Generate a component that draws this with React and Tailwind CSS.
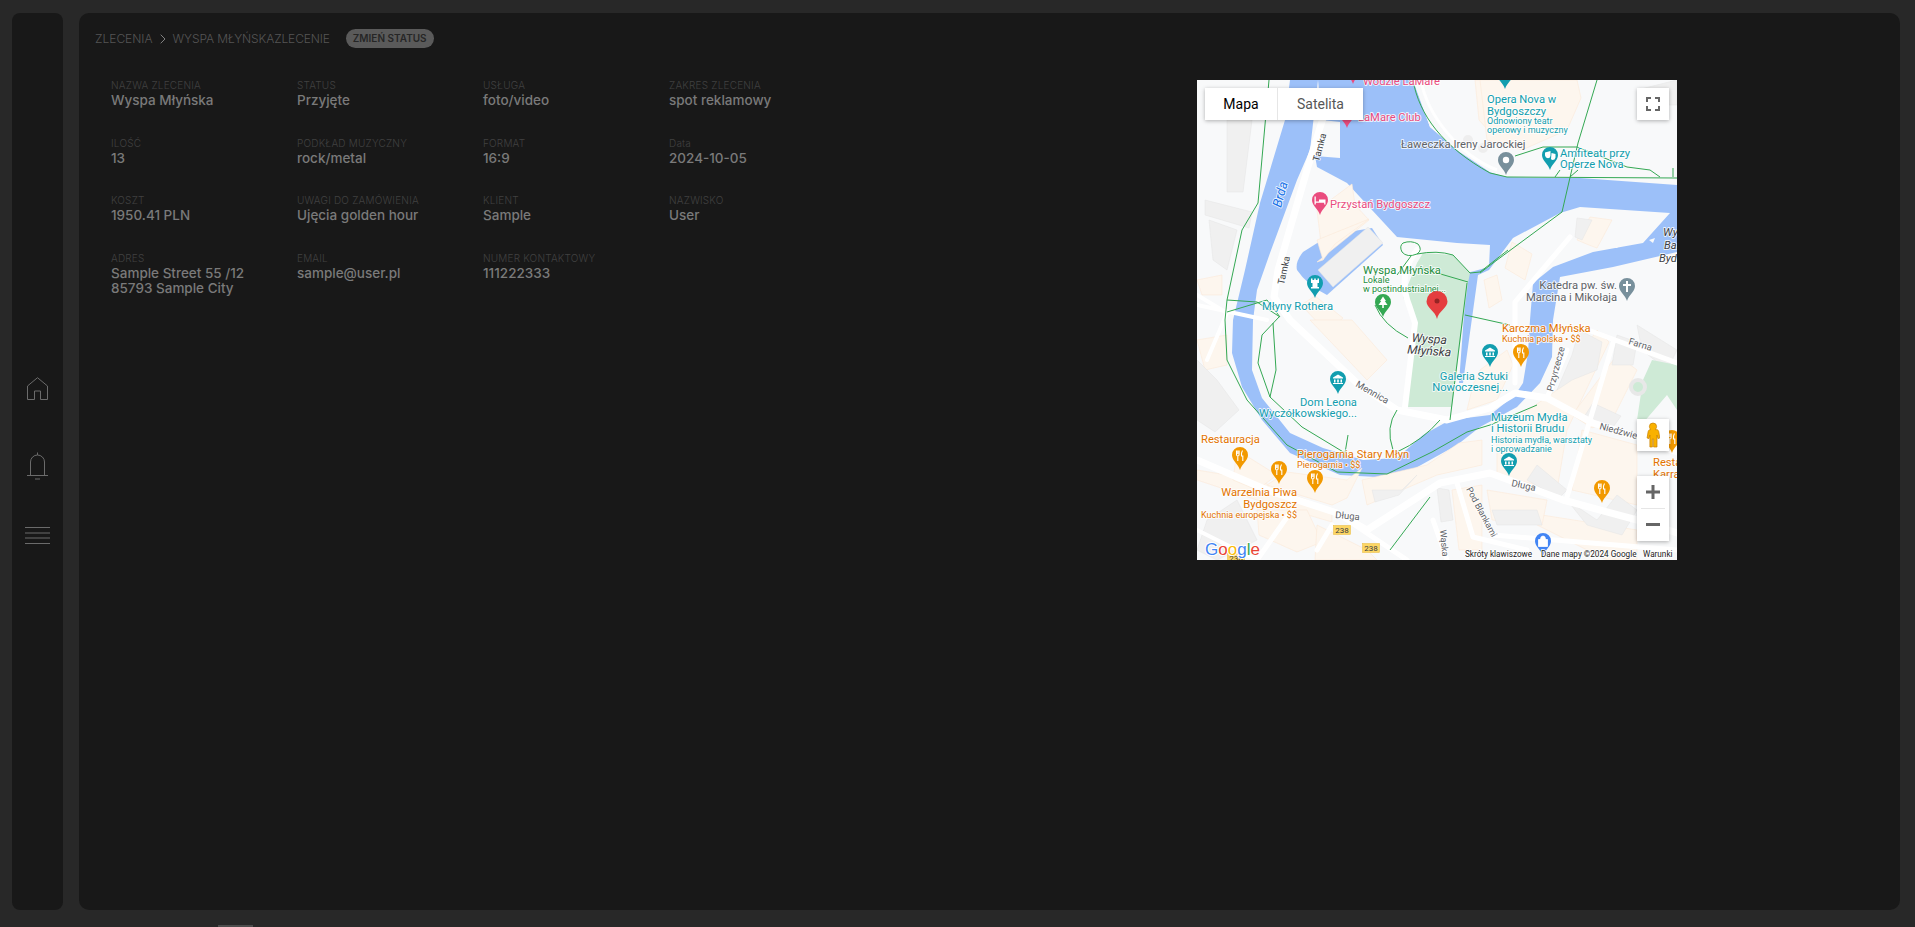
import React from "react";

const fields = [
  ["NAZWA ZLECENIA", "Wyspa Młyńska"], ["STATUS", "Przyjęte"], ["USŁUGA", "foto/video"], ["ZAKRES ZLECENIA", "spot reklamowy"],
  ["ILOŚĆ", "13"], ["PODKŁAD MUZYCZNY", "rock/metal"], ["FORMAT", "16:9"], ["Data", "2024-10-05"],
  ["KOSZT", "1950.41 PLN"], ["UWAGI DO ZAMÓWIENIA", "Ujęcia golden hour"], ["KLIENT", "Sample"], ["NAZWISKO", "User"],
  ["ADRES", "Sample Street 55 /12\n85793 Sample City"], ["EMAIL", "sample@user.pl"], ["NUMER KONTAKTOWY", "111222333"],
];

const TEAL = "#129eaf", ORANGE = "#e37400", PINK = "#ea4c7e", GREEN = "#1e8e3e", GRAY = "#5f6368";

function Pin({ x, y, c, g }) {
  const white = "#fff";
  return (
    <g transform={`translate(${x} ${y})`}>
      <path d="M0 23C-1.5 17-8 14-8 8A8 8 0 1 1 8 8C8 14 1.5 17 0 23Z" fill={c} />
      {g === "food" && <path d="M-3.5 3.5V7.5Q-3.5 9-2.2 9V14M-2.2 3.5V7M-0.9 3.5V7.5Q-0.9 9-2.2 9M2.5 3.5Q1 6 1.5 9H2.8V14" stroke={white} strokeWidth="1.1" fill="none" />}
      {g === "museum" && <path d="M-5 6.5L0 3.5L5 6.5V7.5H-5ZM-4 8.5H-2.5V11.5H-4ZM-.8 8.5H.8V11.5H-.8ZM2.5 8.5H4V11.5H2.5ZM-5 12H5V13H-5Z" fill={white} />}
      {g === "tree" && <path d="M0 2.5L3 7H1.8L4.5 11H.8V14H-.8V11H-4.5L-1.8 7H-3Z" fill={white} />}
      {g === "bed" && <path d="M-5.5 4.5V12.5H-4.2V10.8H4.2V12.5H5.5V7.5H-1V9.5H-4.2V4.5Z" fill={white} />}
      {g === "castle" && <path d="M-4 3.5H-2.5V5H-.8V3.5H.8V5H2.5V3.5H4V8H2.5V12H4V13.5H-4V12H-2.5V8H-4Z" fill={white} />}
      {g === "theater" && <path d="M-5 5.5L.5 4V8.5Q.5 11-2 11.3Q-4.5 11-5 8.5ZM1.5 6L5.5 7V10.5Q5 13 2.5 13Q1 12.5 1 12Z" fill={white} />}
      {g === "dot" && <circle cx="0" cy="8" r="3.2" fill={white} />}
      {g === "cross" && <path d="M-1 3H1V6H4V8H1V14H-1V8H-4V6H-1Z" fill={white} />}
      {g === "shop" && <path d="M-4.5 6.5H4.5V13.5H-4.5ZM-2.5 6.5Q-2.5 3 0 3Q2.5 3 2.5 6.5" fill={white} stroke={white} strokeWidth=".8" />}
    </g>
  );
}

function L({ x, y, c = GRAY, s = 11.2, w = 400, i, a, r, children }) {
  return (
    <text
      x={x} y={y} fill={c} fontSize={s} fontWeight={w} fontStyle={i ? "italic" : "normal"} textAnchor={a}
      transform={r ? `rotate(${r} ${x} ${y})` : undefined}
      stroke="#fff" strokeWidth="1.8" strokeOpacity=".8" paintOrder="stroke" strokeLinejoin="round"
      fontFamily="Roboto, sans-serif"
    >{children}</text>
  );
}

function Shield({ x, y }) {
  return (
    <g>
      <rect x={x - 8.5} y={y - 4.5} width="17" height="9" fill="#fdd663" stroke="#e8b93a" strokeWidth=".5" />
      <text x={x} y={y + 3} fontSize="8" textAnchor="middle" fill="#3c4043" fontFamily="Roboto, sans-serif">238</text>
    </g>
  );
}

const peach = [
  "120,130 155,104 158,125 172,140 120,182 126,180",
  "120,160 172,139 138,164 126,180",
  "104,225 118,216 146,238 130,252",
  "0,200 25,195 25,215 5,215",
  "278,0 320,0 326,25 300,60 282,40",
  "283,290 310,270 316,285 300,320 270,330 276,305",
  "0,260 30,255 30,285 8,290",
  "113,240 170,300 190,280 155,240",
  "0,390 60,400 110,420 135,432 135,442 60,420 0,400",
  "40,370 80,395 60,410 36,400",
  "70,405 135,425 150,418 165,388 150,400 90,392",
  "165,400 230,385 262,363 285,360 285,385 240,395 170,425",
  "60,430 110,430 125,462 100,472 62,455",
  "120,445 170,470 180,480 118,480",
  "300,352 360,310 400,250 412,262 370,350 360,410 300,395",
  "375,335 420,275 440,290 415,340 395,348",
  "385,350 440,365 440,425 375,410",
  "345,435 440,450 440,480 410,480 340,445",
  "255,410 285,405 285,470 262,470",
  "290,410 350,420 345,445 295,440",
  "393,137 415,140 400,168 392,165 380,160",
  "315,162 335,174 328,200 308,188",
  "287,200 300,195 305,220 292,228",
  "283,0 380,0 384,18 370,50 325,70 290,60",
];
const grayB = [
  "121,190 171,147 186,163 136,207",
  "8,120 55,132 52,148 8,135",
  "30,40 55,40 46,112 30,112",
  "12,140 40,150 30,190 16,180",
  "0,280 20,300 42,330 18,352 0,340",
  "382,250 405,262 400,290 375,300 360,310 375,275",
  "396,323 424,336 414,350 385,340",
  "340,385 370,410 362,418 330,400",
  "380,138 395,140 385,160 378,157",
  "175,410 205,410 220,395 202,415 178,422",
  "10,440 40,420 60,460 20,480 0,470",
  "295,430 340,430 345,445 300,445",
  "370,420 400,440 420,415 440,430 425,455 390,445",
  "240,408 252,410 256,440 244,442",
  "440,10 480,0 480,25 455,25",
  "420,255 440,262 436,285 415,285",
  "440,245 480,270 470,290 445,270",
];

function MapArt() {
  return (
    <svg viewBox="0 0 480 480" width="480" height="480" className="block">
      <rect width="480" height="480" fill="#f8f9fa" />
      {/* water */}
      <polygon fill="#9cc0f9" points="93,0 216,0 233,47 260,70 293,92 310,97 383,98 480,105 480,172 416,187 363,197 356,240 355,277 343,303 320,327 283,347 260,365 233,380 206,395 180,397 143,395 93,373 65,340 45,307 35,273 36,240 48,190 63,123 88,40" />
      {/* land */}
      <polygon fill="#f8f9fa" points="121,0 125,40 143,42 143,78 118,76 120,87 150,103 200,157 260,163 293,165 292,187 270,193 262,303 266,303 281,195 292,190 316,158 363,133 383,127 473,133 446,163 396,172 356,187 336,203 333,240 331,273 326,303 318,315 293,335 253,340 226,355 200,378 166,380 126,368 93,353 65,318 55,290 56,240 60,210 73,173 100,100 113,70" />
      <path d="M100 190Q98 182 106 172L133 155L175 148L186 165L130 215Q110 205 100 190Z" fill="#9cc0f9" />
      <path d="M408 167Q420 160 425 162L420 168ZM452 160L458 158L456 163Z" fill="#f8f9fa" />
      {/* land north east */}
      <path d="M216 0H480V98L383 98 310 97 293 92 260 70 233 47Z" fill="#f8f9fa" />
      <path d="M224 0C230 35 262 75 300 90" fill="none" stroke="#fff" strokeWidth="3" />
      <ellipse cx="271" cy="60" rx="5" ry="5" fill="#eee" /><ellipse cx="286" cy="68" rx="5" ry="5" fill="#eee" />
      {/* blocks */}
      {peach.map((p, i) => <polygon key={i} points={p} fill="#fdf6ee" stroke="#fbe9d8" strokeWidth=".6" />)}
      {grayB.map((p, i) => <polygon key={i} points={p} fill="#f0f0f0" stroke="#e5e5e5" strokeWidth=".5" />)}
      {/* park */}
      <polygon fill="#ceead6" points="220,183 226,173 256,175 273,193 271,203 255,327 208,327 218,243 206,217" />
      <polygon fill="#ceead6" points="446,300 440,340 440,350 470,315 480,330 480,285 455,280" />
      <circle cx="441" cy="307" r="7" fill="#ceead6" stroke="#e8e8e8" strokeWidth="4" />
      {/* roads */}
      <g fill="none" stroke="#fff" strokeLinecap="round" strokeLinejoin="round">
        <path strokeWidth="7" d="M126 38L110 90L81 190L77 217L93 240L160 303L200 330L250 340L293 328L318 313L350 318L396 343L440 357L480 372" />
        <path strokeWidth="6" d="M220 170Q200 195 212 225L218 243L208 327" />
        <path strokeWidth="7" d="M0 380L70 410L140 433L170 450L243 403L293 393L366 420L440 440L480 453" />
        <path strokeWidth="5" d="M140 433L210 480M120 470L135 445M60 480L95 430" />
        <path strokeWidth="5" d="M416 263L370 417M383 247L480 283M373 157L318 222V303M260 403L276 457L330 470M236 440L250 480M350 318L370 270M296 455L480 470" />
        <path strokeWidth="4" d="M0 215L30 233L10 280M0 450L60 480M70 240L0 225" />
      </g>
      {/* paths */}
      <g fill="none" stroke="#34a853" strokeWidth="1">
        <path d="M72 0L61 123L45 150L30 220L28 240L30 280L50 320L90 365L140 392L190 394L235 372L270 352L293 345L340 325" />
        <path d="M30 220L60 222L83 237L70 220L30 232" />
        <path d="M82 237L65 255L61 283L73 317L105 347L148 373M76 243L79 290L73 317M151 355L148 373" />
        <path d="M200 330Q188 347 196 370M243 340Q226 360 200 372" />
        <path d="M206 163Q214 160 221 164Q226 170 220 174Q210 178 205 172Q202 166 206 163Z" />
        <path d="M220 174Q240 170 256 175L273 193L283 192L311 170M214 176L200 195M223 188L271 202M270 203L253 340" />
        <path d="M178 225Q186 245 211 258M268 235L313 245" />
        <path d="M216 0C222 35 246 67 293 93L310 97L480 98" />
        <path d="M400 0L381 63L365 132L296 183L283 193" />
        <path d="M318 76L346 67L380 67L430 87L453 90L463 97M358 97L363 90M373 97L381 90M476 97V88" />
        <path d="M193 470L233 417" />
      </g>
      {/* labels */}
      <L x="166" y="5" c={PINK}>Wodzie LaMare</L>
      <L x="161" y="41" c={PINK}>LaMare Club</L>
      <L x="133" y="128" c={PINK}>Przystań Bydgoszcz</L>
      <L x="84" y="128" c="#1a73e8" s={13} i r={-75}>Brda</L>
      <L x="122" y="82" s={9.5} c="#3c4043" r={-75}>Tamka</L>
      <L x="87" y="205" s={9.5} c="#3c4043" r={-78}>Tamka</L>
      <L x="166" y="194" c={GREEN}>Wyspa Młyńska</L>
      <L x="166" y="203" c={GREEN} s={9}>Lokale</L>
      <L x="166" y="211.5" c={GREEN} s={9}>w postindustrialnej...</L>
      <L x="65" y="230" c={TEAL}>Młyny Rothera</L>
      <L x="232" y="263" c="#3c4043" s={12.2} i a="middle" r={4}>Wyspa</L>
      <L x="232" y="275" c="#3c4043" s={12.2} i a="middle" r={4}>Młyńska</L>
      <L x="305" y="252" c={ORANGE}>Karczma Młyńska</L>
      <L x="305" y="261.5" c={ORANGE} s={9}>Kuchnia polska • $$</L>
      <L x="311" y="300" c={TEAL} a="end">Galeria Sztuki</L>
      <L x="311" y="311" c={TEAL} a="end">Nowoczesnej...</L>
      <L x="103" y="326" c={TEAL}>Dom Leona</L>
      <L x="62" y="337" c={TEAL}>Wyczółkowskiego...</L>
      <L x="4" y="363" c={ORANGE}>Restauracja</L>
      <L x="100" y="378" c={ORANGE}>Pierogarnia Stary Młyn</L>
      <L x="100" y="387.5" c={ORANGE} s={9}>Pierogarnia • $$</L>
      <L x="100" y="416" c={ORANGE} a="end">Warzelnia Piwa</L>
      <L x="100" y="428" c={ORANGE} a="end">Bydgoszcz</L>
      <L x="100" y="437.5" c={ORANGE} s={9} a="end">Kuchnia europejska • $$</L>
      <L x="158" y="306" s={9.5} r={30}>Mennica</L>
      <L x="138" y="438" s={9.5} r={5}>Długa</L>
      <L x="314" y="406" s={9.5} r={12}>Długa</L>
      <L x="243" y="450" s={9} r={85}>Wąska</L>
      <L x="269" y="409" s={9} r={62}>Pod Blankami</L>
      <L x="431" y="264" s={9.5} r={17}>Farna</L>
      <L x="356" y="312" s={9.5} r={-75}>Przyrzecze</L>
      <L x="402" y="349" s={9.5} r={15}>Niedźwiedzia</L>
      <L x="290" y="23" c={TEAL}>Opera Nova w</L>
      <L x="290" y="35" c={TEAL}>Bydgoszczy</L>
      <L x="290" y="43.5" c={TEAL} s={9}>Odnowiony teatr</L>
      <L x="290" y="52.5" c={TEAL} s={9}>operowy i muzyczny</L>
      <L x="204" y="68">Ławeczka Ireny Jarockiej</L>
      <L x="363" y="77" c={TEAL}>Amfiteatr przy</L>
      <L x="363" y="88" c={TEAL}>Operze Nova</L>
      <L x="420" y="209" a="end">Katedra pw. św.</L>
      <L x="420" y="221" a="end">Marcina i Mikołaja</L>
      <L x="466" y="156" c="#3c4043" i>Wyspa</L>
      <L x="467" y="169" c="#3c4043" i>Bart.</L>
      <L x="462" y="182" c="#3c4043" i>Bydgoszcz</L>
      <L x="294" y="341" c={TEAL}>Muzeum Mydła</L>
      <L x="294" y="352" c={TEAL}>i Historii Brudu</L>
      <L x="294" y="362.5" c={TEAL} s={9}>Historia mydła, warsztaty</L>
      <L x="294" y="371.5" c={TEAL} s={9}>i oprowadzanie</L>
      <L x="456" y="386" c={ORANGE}>Restauracja</L>
      <L x="456" y="398" c={ORANGE}>Karramba</L>
      <Shield x={145} y={450} /><Shield x={174} y={468} /><Shield x={39} y={478} />
      {/* pins */}
      <Pin x={156} y={-19} c={PINK} />
      <Pin x={150} y={25} c={PINK} />
      <Pin x={123} y={112} c={PINK} g="bed" />
      <Pin x={118} y={195} c={TEAL} g="castle" />
      <Pin x={186} y={214} c="#34a853" g="tree" />
      <Pin x={293} y={264} c={TEAL} g="museum" />
      <Pin x={324} y={264} c="#f29900" g="food" />
      <Pin x={141} y={291} c={TEAL} g="museum" />
      <Pin x={43} y={367} c="#f29900" g="food" />
      <Pin x={82} y={381} c="#f29900" g="food" />
      <Pin x={118} y={390} c="#f29900" g="food" />
      <Pin x={308} y={-14} c={TEAL} />
      <Pin x={309} y={72} c="#78909c" g="dot" />
      <Pin x={353} y={67} c={TEAL} g="theater" />
      <Pin x={430} y={198} c="#78909c" g="cross" />
      <Pin x={312} y={373} c={TEAL} g="museum" />
      <Pin x={405} y={400} c="#f29900" g="food" />
      <Pin x={475} y={350} c="#f29900" g="food" />
      <Pin x={346} y={453} c="#4285f4" g="shop" />
      {/* marker */}
      <g transform="translate(240 211)">
        <path d="M0 28C-1.5 20-10.5 17-10.5 10.5A10.5 10.5 0 1 1 10.5 10.5C10.5 17 1.5 20 0 28Z" fill="#e53d3f" />
        <circle cx="0" cy="10" r="2.5" fill="#7a1c1c" opacity=".75" />
      </g>
      {/* attribution */}
      <text x="8" y="475" fontSize="17" fontFamily="Liberation Sans, sans-serif" stroke="#fff" strokeWidth="2" paintOrder="stroke">
        <tspan fill="#4285f4">G</tspan><tspan fill="#ea4335">o</tspan><tspan fill="#fbbc05">o</tspan><tspan fill="#4285f4">g</tspan><tspan fill="#34a853">l</tspan><tspan fill="#ea4335">e</tspan>
      </text>
      <g fontSize="8.2" fontFamily="Roboto, sans-serif" fill="#222" stroke="#fff" strokeWidth="1.5" paintOrder="stroke">
        <text x="268" y="477">Skróty klawiszowe</text>
        <text x="344" y="477">Dane mapy ©2024 Google</text>
        <text x="446" y="477">Warunki</text>
      </g>
    </svg>
  );
}

function GMap() {
  const btn = "absolute bg-white flex items-center justify-center shadow-[0_1px_4px_rgba(0,0,0,0.3)]";
  return (
    <div className="relative w-[480px] h-[480px] mt-[2px] ml-[342px] overflow-hidden shrink-0 font-['Roboto',sans-serif]">
      <MapArt />
      <div className="absolute left-2 top-2 h-8 flex bg-white text-[14px] shadow-[0_1px_4px_rgba(0,0,0,0.3)]">
        <div className="w-[73px] flex items-center justify-center text-black border-r border-[#e6e6e6]">Mapa</div>
        <div className="w-[85px] flex items-center justify-center text-[#565656]">Satelita</div>
      </div>
      <div className={`${btn} left-[440px] top-2 w-8 h-8`}>
        <svg width="14" height="14" viewBox="0 0 14 14" fill="none" stroke="#666" strokeWidth="2"><path d="M1 5V1H5M9 1H13V5M13 9V13H9M5 13H1V9" /></svg>
      </div>
      <div className={`${btn} left-[440px] top-[339px] w-8 h-8`}>
        <svg width="14" height="26" viewBox="0 0 14 26">
          <path d="M7 1a3.6 3.6 0 0 1 3.6 3.6c0 1.4-.8 2.4-1.6 3h1.5c1.4 0 2 1 2.3 2.2l1 6.2-1.8.6-1-3.6V25H7.6v-8H6.4v8H3.900V13l-1 3.600-1.800-.6 1-6.200C2.400 8.600 3 7.600 4.400 7.600H5C4.200 7 3.400 6 3.400 4.600A3.600 3.600 0 0 1 7 1Z" fill="#f9b100" stroke="#c77f00" strokeWidth=".7" />
        </svg>
      </div>
      <div className={`${btn} left-[440px] top-[396px] w-8 h-[65px] flex-col`}>
        <div className="h-8 flex items-center justify-center">
          <svg width="14" height="14" viewBox="0 0 14 14" fill="#666"><path d="M5.500 0H8.500V5.500H14V8.500H8.500V14H5.500V8.500H0V5.500H5.500Z" /></svg>
        </div>
        <div className="w-6 h-px bg-[#e6e6e6]" />
        <div className="h-8 flex items-center justify-center">
          <svg width="14" height="4" viewBox="0 0 14 4" fill="#666"><rect width="14" height="3" /></svg>
        </div>
      </div>
    </div>
  );
}

export default function App() {
  return (
    <div className="bg-[#282828] w-full h-[927px] overflow-hidden font-['Inter',sans-serif]">
      <div className="flex h-[925px] pt-[13px] pb-[15px] pl-3 pr-[15px] gap-4">
        <aside className="w-[51px] bg-[#181818] rounded-lg flex flex-col items-center justify-center pb-[2px] shrink-0">
          <svg width="21" height="23" viewBox="0 0 21 23" fill="none" stroke="#6b6b6b"><path d="M.5 22.500V9L10.500 .7 20.500 9V22.500H13.500V14H7.500V22.500Z" /></svg>
          <svg className="mt-[52px]" width="21" height="28" viewBox="0 0 21 28" fill="none" stroke="#6b6b6b"><path d="M3.500 23V10A7 7 0 0 1 17.500 10V23" /><path d="M0 23.500H21" /><path d="M10.500 .5V3" /><path d="M8 27H13" /></svg>
          <svg className="mt-[47px]" width="25" height="17" viewBox="0 0 25 17" stroke="#6b6b6b"><path d="M0 .5H25M0 6H25M0 11H25M0 16.500H25" /></svg>
        </aside>
        <main className="flex-1 bg-[#181818] rounded-[10px] pt-4 px-4">
          <div className="flex items-center h-[19px] text-[12px] font-light text-[#555]">
            <span>ZLECENIA</span>
            <svg className="mx-[7px]" width="6" height="10" viewBox="0 0 6 10" fill="none" stroke="#808080"><path d="M.7 .7L5 5 .7 9.300" /></svg>
            <span className="tracking-[-0.01em]">WYSPA MŁYŃSKAZLECENIE</span>
            <span className="ml-4 h-[19px] px-[7px] rounded-full bg-[#5a5a5a] text-[#262626] text-[10px] font-semibold flex items-center">ZMIEŃ STATUS</span>
          </div>
          <div className="flex items-start mt-[30px]">
            <div className="grid grid-cols-[repeat(4,186px)] gap-y-[27.67px] ml-4 shrink-0 w-[744px]">
              {fields.map(([k, v]) => (
                <div key={k}>
                  <div className="text-[10px] leading-[15px] font-light text-[#414141] tracking-[0.02em]">{k}</div>
                  <div className="text-[13.5px] leading-[15px] font-medium text-[#7a7a7a] whitespace-pre-line">{v}</div>
                </div>
              ))}
            </div>
            <GMap />
          </div>
        </main>
      </div>
      <div className="ml-[218px] w-[35px] h-[2px] bg-[#4d4d4d]" />
    </div>
  );
}
